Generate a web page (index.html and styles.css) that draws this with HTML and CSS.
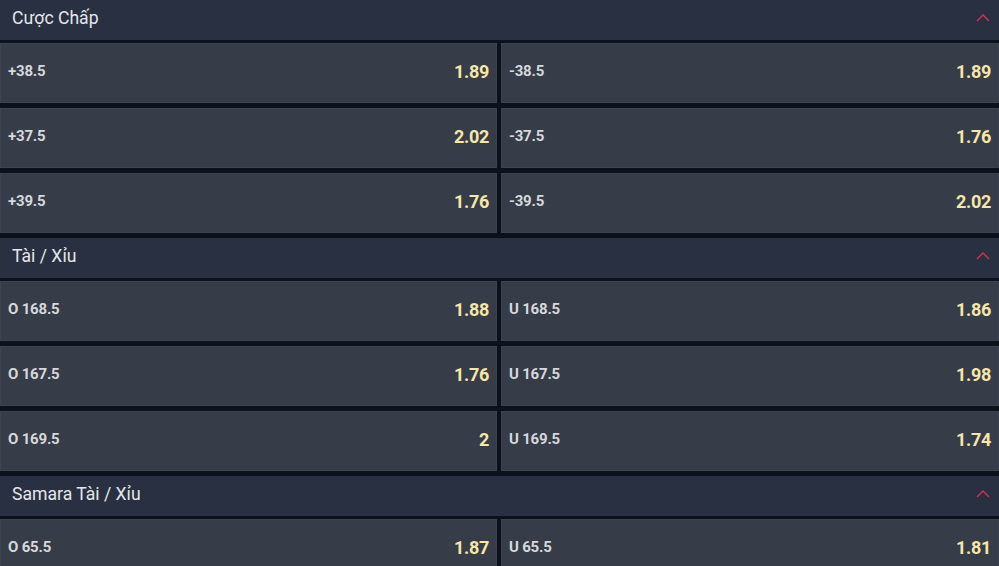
FILE: index.html
```html
<!DOCTYPE html>
<html lang="vi">
<head>
<meta charset="utf-8">
<title>Markets</title>
<link rel="stylesheet" href="styles.css">
</head>
<body>
<div class="markets">
  <section class="market">
    <div class="market-head">
      <span class="market-title">Cược Chấp</span>
      <svg class="chev" viewBox="0 0 14 8" width="14" height="8"><path d="M1 7 L7 1 L13 7" fill="none" stroke="#d0344f" stroke-width="1.4"/></svg>
    </div>
    <div class="grid">
      <div class="cell"><span class="label">+38.5</span><span class="odd">1.89</span></div>
      <div class="cell"><span class="label">-38.5</span><span class="odd">1.89</span></div>
      <div class="cell"><span class="label">+37.5</span><span class="odd">2.02</span></div>
      <div class="cell"><span class="label">-37.5</span><span class="odd">1.76</span></div>
      <div class="cell"><span class="label">+39.5</span><span class="odd">1.76</span></div>
      <div class="cell"><span class="label">-39.5</span><span class="odd">2.02</span></div>
    </div>
  </section>
  <section class="market">
    <div class="market-head">
      <span class="market-title">Tài / Xỉu</span>
      <svg class="chev" viewBox="0 0 14 8" width="14" height="8"><path d="M1 7 L7 1 L13 7" fill="none" stroke="#d0344f" stroke-width="1.4"/></svg>
    </div>
    <div class="grid">
      <div class="cell"><span class="label">O 168.5</span><span class="odd">1.88</span></div>
      <div class="cell"><span class="label">U 168.5</span><span class="odd">1.86</span></div>
      <div class="cell"><span class="label">O 167.5</span><span class="odd">1.76</span></div>
      <div class="cell"><span class="label">U 167.5</span><span class="odd">1.98</span></div>
      <div class="cell"><span class="label">O 169.5</span><span class="odd">2</span></div>
      <div class="cell"><span class="label">U 169.5</span><span class="odd">1.74</span></div>
    </div>
  </section>
  <section class="market">
    <div class="market-head">
      <span class="market-title">Samara Tài / Xỉu</span>
      <svg class="chev" viewBox="0 0 14 8" width="14" height="8"><path d="M1 7 L7 1 L13 7" fill="none" stroke="#d0344f" stroke-width="1.4"/></svg>
    </div>
    <div class="grid">
      <div class="cell"><span class="label">O 65.5</span><span class="odd">1.87</span></div>
      <div class="cell"><span class="label">U 65.5</span><span class="odd">1.81</span></div>
    </div>
  </section>
</div>
</body>
</html>
```

FILE: styles.css
```css
* { box-sizing: border-box; }
html, body {
  margin: 0;
  padding: 0;
  background: #0c121c;
  overflow: hidden;
}
body {
  width: 999px;
  height: 566px;
  font-family: Roboto, "Noto Sans", sans-serif;
}
.markets {
  display: flex;
  flex-direction: column;
}
.market {
  display: flex;
  flex-direction: column;
}
.market-head {
  height: 40px;
  margin-bottom: 3px;
  background: #283042;
  display: flex;
  align-items: center;
  justify-content: space-between;
  padding: 0 9px 5px 12px;
}
.market-title {
  color: #e4e6ea;
  font-size: 17.6px;
}
.chev {
  display: block;
}
.grid {
  display: grid;
  grid-template-columns: 497px 498px;
  column-gap: 4px;
  row-gap: 5px;
  margin-bottom: 5px;
}
.cell {
  height: 60px;
  background: #363c48;
  border: 1px solid #3d4350;
  display: flex;
  align-items: center;
  justify-content: space-between;
  padding: 0 7px 4px 7px;
}
.label {
  color: #d6d8dc;
  font-size: 15px;
  font-weight: 700;
  letter-spacing: -0.2px;
}
.odd {
  color: #f7e7a6;
  font-size: 18px;
  font-weight: 700;
  letter-spacing: -0.3px;
  padding-top: 1px;
}
```
